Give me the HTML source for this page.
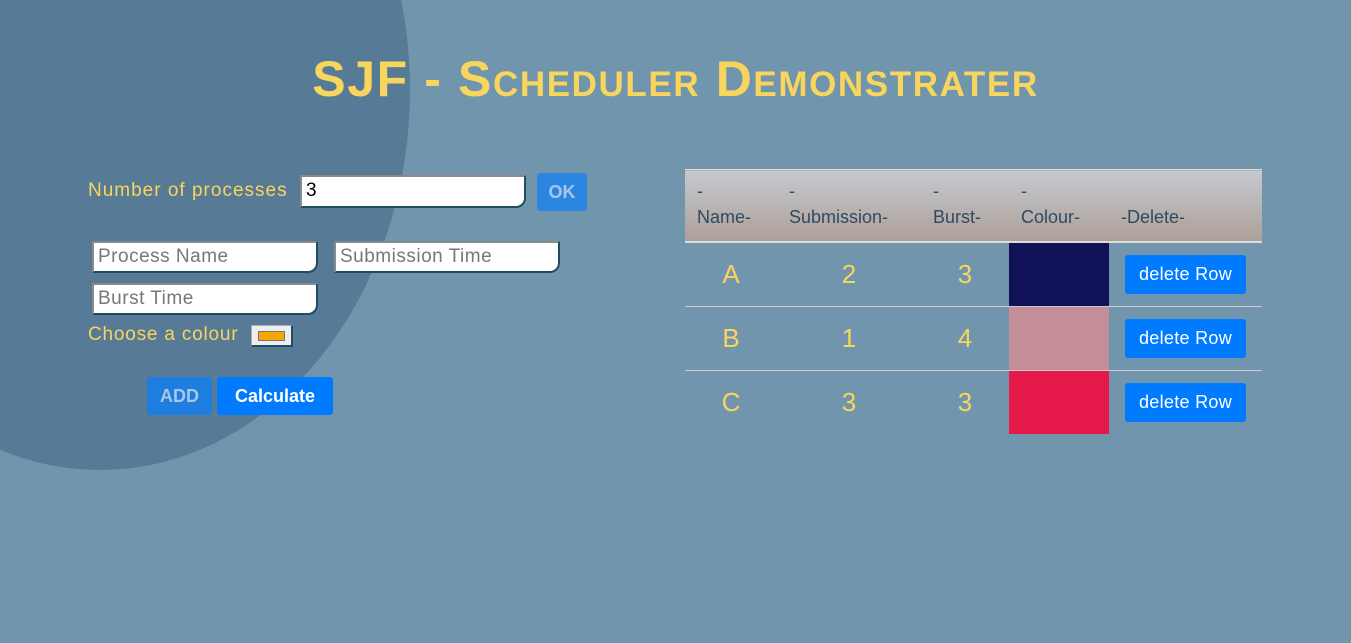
<!DOCTYPE html>
<html><head><style>
body{margin:0;width:1351px;height:643px;background:#7295ae;overflow:hidden;position:relative;font-family:"Liberation Sans",sans-serif;}
.blob{position:absolute;left:-210px;top:-290px;width:620px;height:760px;border-radius:50%;background:#577b97;}
h1{position:absolute;left:0;width:1351px;top:50px;margin:0;text-align:center;color:#f8d55c;font-size:50px;font-variant:small-caps;font-weight:bold;letter-spacing:1.6px;}
.lbl{position:absolute;color:#f8d55c;font-size:19px;letter-spacing:0.8px;}
.inp{position:absolute;background:#fff;border-top:2px solid #8a8a8a;border-left:2px solid #8a8a8a;border-right:2px solid #1f4c63;border-bottom:2px solid #1f4c63;border-bottom-right-radius:10px;box-sizing:border-box;font-size:19px;color:#777;padding:3px 4px;letter-spacing:0.5px}
.btn{position:absolute;border-radius:3px;color:#fff;font-size:18px;font-weight:bold;text-align:center;box-sizing:border-box;}
table{position:absolute;left:685px;top:169px;width:577px;border-collapse:collapse;}
th{background:linear-gradient(#c4c9cf,#ad9f97);color:#2f4a62;font-weight:normal;text-align:left;font-size:18px;height:60px;padding:0 0 11px 12px;vertical-align:bottom;border-top:1px solid #ddd;border-bottom:2px solid #ddd;line-height:26px}
td{height:63px;border-bottom:1px solid #ccc;color:#f8d55c;font-size:26px;text-align:center;padding:0}
.db{display:inline-block;background:#007bff;color:#fff;font-size:18px;border-radius:3px;padding:9px 14px;letter-spacing:0.3px}
</style></head><body>
<div class="blob"></div>
<h1>SJF - Scheduler Demonstrater</h1>
<div class="lbl" style="left:88px;top:180px;letter-spacing:1px">Number of processes</div>
<div class="inp" style="left:300px;top:175px;width:226px;height:33px;color:#000">3</div>
<div class="btn" style="left:537px;top:173px;width:50px;height:38px;line-height:38px;background:#2a86e0;color:#a9c6e6">OK</div>
<div class="inp" style="left:92px;top:241px;width:226px;height:32px">Process Name</div>
<div class="inp" style="left:334px;top:241px;width:226px;height:32px">Submission Time</div>
<div class="inp" style="left:92px;top:283px;width:226px;height:32px">Burst Time</div>
<div class="lbl" style="left:88px;top:324px">Choose a colour</div>
<div style="position:absolute;left:251px;top:325px;width:42px;height:22px;background:#eee;border:1px solid #aaa;border-right:2px solid #1f4c63;border-bottom:2px solid #1f4c63;box-sizing:border-box"><div style="margin:5px 6px;height:8px;background:#f6a800;border:1px solid #777"></div></div>
<div class="btn" style="left:147px;top:377px;width:65px;height:38px;line-height:38px;background:#1d7ee0;color:#a9c6e6">ADD</div>
<div class="btn" style="left:217px;top:377px;width:116px;height:38px;line-height:38px;background:#007bff">Calculate</div>
<table>
<tr><th style="width:80px">-<br>Name-</th><th style="width:132px">-<br>Submission-</th><th style="width:76px">-<br>Burst-</th><th style="width:88px">-<br>Colour-</th><th>-Delete-</th></tr>
<tr><td>A</td><td>2</td><td>3</td><td style="background:#101157"></td><td><span class="db">delete Row</span></td></tr>
<tr><td>B</td><td>1</td><td>4</td><td style="background:#c48e99"></td><td><span class="db">delete Row</span></td></tr>
<tr><td style="border:none">C</td><td style="border:none">3</td><td style="border:none">3</td><td style="background:#e5184a;border:none"></td><td style="border:none"><span class="db">delete Row</span></td></tr>
</table>
</body></html>
